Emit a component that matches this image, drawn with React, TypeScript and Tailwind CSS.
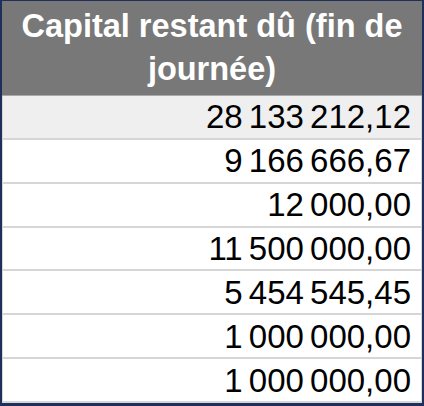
const values = [
  '28 133 212,12',
  '9 166 666,67',
  '12 000,00',
  '11 500 000,00',
  '5 454 545,45',
  '1 000 000,00',
  '1 000 000,00',
]

export default function App() {
  return (
    <div className="w-[424px] h-[406px] bg-white font-['Liberation_Sans',Arial,sans-serif]">
      <div className="h-full flex flex-col border-l-2 border-r-2 border-t border-b-[3px] border-[#1f2f5c]">
        <div className="h-[95px] bg-[#787878] border-b border-[#a8a8a8] flex items-center justify-center text-center text-white font-bold text-[32.5px] leading-[43px] px-1">
          Capital restant dû (fin de journée)
        </div>
        <div className="flex-1 flex flex-col">
          {values.map((v, i) => (
            <div
              key={i}
              className={`flex-1 flex items-center justify-end pr-[10px] text-[33px] leading-none [word-spacing:-3px] text-black border-x border-b-2 border-[#d6d6d6] ${
                i === 0 ? 'bg-[#efefef]' : 'bg-white'
              }`}
            >
              {v}
            </div>
          ))}
        </div>
      </div>
    </div>
  )
}
